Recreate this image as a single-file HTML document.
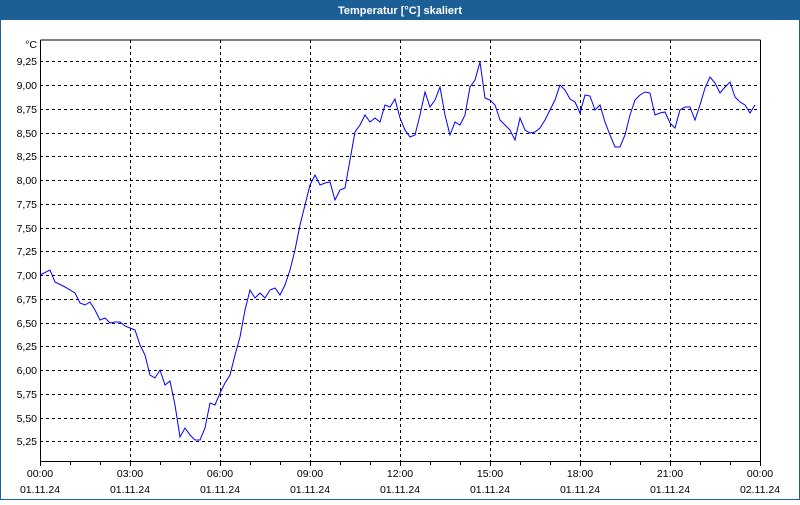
<!DOCTYPE html>
<html><head><style>
body{margin:0;width:800px;height:500px;overflow:hidden;background:#fff;font-family:"Liberation Sans",sans-serif}
</style></head><body>
<svg width="800" height="500" xmlns="http://www.w3.org/2000/svg" font-family="Liberation Sans, sans-serif" font-size="10.5">
<rect x="0" y="0" width="800" height="500" fill="#fff"/>
<rect x="0.5" y="0.5" width="799" height="499" fill="none" stroke="#1c5f96"/>
<rect x="0" y="0" width="800" height="20" fill="#1c5f96"/>
<text x="400" y="14" fill="#fff" font-weight="bold" font-size="11" text-anchor="middle">Temperatur [°C] skaliert</text>
<g stroke="#000" stroke-dasharray="3,3" stroke-width="1">
<path d="M40 61.5H760M40 85.5H760M40 109.5H760M40 133.5H760M40 156.5H760M40 180.5H760M40 204.5H760M40 228.5H760M40 251.5H760M40 275.5H760M40 299.5H760M40 323.5H760M40 346.5H760M40 370.5H760M40 394.5H760M40 418.5H760M40 441.5H760"/>
<path d="M130.5 40V461M220.5 40V461M310.5 40V461M400.5 40V461M490.5 40V461M580.5 40V461M670.5 40V461"/>
</g>
<path d="M40.5 40V461.5H760.5V40" fill="none" stroke="#000"/>
<path d="M40.5 40H760.5" stroke="#000"/>
<g stroke="#000"><path d="M40.5 461v5M70.5 461v4M100.5 461v4M130.5 461v5M160.5 461v4M190.5 461v4M220.5 461v5M250.5 461v4M280.5 461v4M310.5 461v5M340.5 461v4M370.5 461v4M400.5 461v5M430.5 461v4M460.5 461v4M490.5 461v5M520.5 461v4M550.5 461v4M580.5 461v5M610.5 461v4M640.5 461v4M670.5 461v5M700.5 461v4M730.5 461v4M760.5 461v5"/></g>
<g text-anchor="end" fill="#000">
<text x="37" y="48">°C</text>
<text x="37" y="65">9,25</text><text x="37" y="89">9,00</text><text x="37" y="113">8,75</text><text x="37" y="137">8,50</text><text x="37" y="160">8,25</text><text x="37" y="184">8,00</text><text x="37" y="208">7,75</text><text x="37" y="232">7,50</text><text x="37" y="255">7,25</text><text x="37" y="279">7,00</text><text x="37" y="303">6,75</text><text x="37" y="327">6,50</text><text x="37" y="350">6,25</text><text x="37" y="374">6,00</text><text x="37" y="398">5,75</text><text x="37" y="422">5,50</text><text x="37" y="445">5,25</text>
</g>
<g text-anchor="middle" fill="#000">
<text x="40" y="477">00:00</text><text x="130" y="477">03:00</text><text x="220" y="477">06:00</text><text x="310" y="477">09:00</text><text x="400" y="477">12:00</text><text x="490" y="477">15:00</text><text x="580" y="477">18:00</text><text x="670" y="477">21:00</text><text x="760" y="477">00:00</text>
<text x="40" y="493">01.11.24</text><text x="130" y="493">01.11.24</text><text x="220" y="493">01.11.24</text><text x="310" y="493">01.11.24</text><text x="400" y="493">01.11.24</text><text x="490" y="493">01.11.24</text><text x="580" y="493">01.11.24</text><text x="670" y="493">01.11.24</text><text x="760" y="493">02.11.24</text>
</g>
<polyline fill="none" stroke="#0000ff" stroke-width="1" points="40,275 50,270 55,282 65,287 75,293 80,303 85,305 90,302 95,310 100,320 105,318 110,323 115,322 120,322 125,326 130,328 135,330 140,345 145,355 150,375 155,378 160,370 165,385 170,381 175,405 180,437 185,428 190,435 195,440 200,440 205,428 210,403 215,405 220,393 225,383 230,375 235,355 240,337 245,310 250,290 255,298 260,293 265,298 270,290 275,288 280,295 285,285 290,270 295,250 300,225 305,205 310,185 315,175 320,185 325,183 330,182 335,200 340,190 345,188 350,160 355,132 360,125 365,115 370,122 375,118 380,122 385,105 390,107 395,99 400,118 405,130 410,137 415,135 420,115 425,92 430,107 435,100 440,87 445,115 450,135 455,122 460,125 465,115 470,87 475,80 480,62 485,98 490,100 495,105 500,120 505,125 510,130 515,140 520,118 525,130 530,133 535,132 540,128 545,120 550,110 555,100 560,85 565,90 570,99 575,102 580,113 585,95 590,96 595,110 600,105 605,122 610,135 615,147 620,147 625,135 630,115 635,100 640,95 645,92 650,93 655,115 660,113 665,112 670,123 675,128 680,110 685,107 690,107 695,120 700,105 705,88 710,77 715,83 720,93 725,87 730,82 735,97 740,102 745,105 750,113 755,105"/>
</svg>
</body></html>
